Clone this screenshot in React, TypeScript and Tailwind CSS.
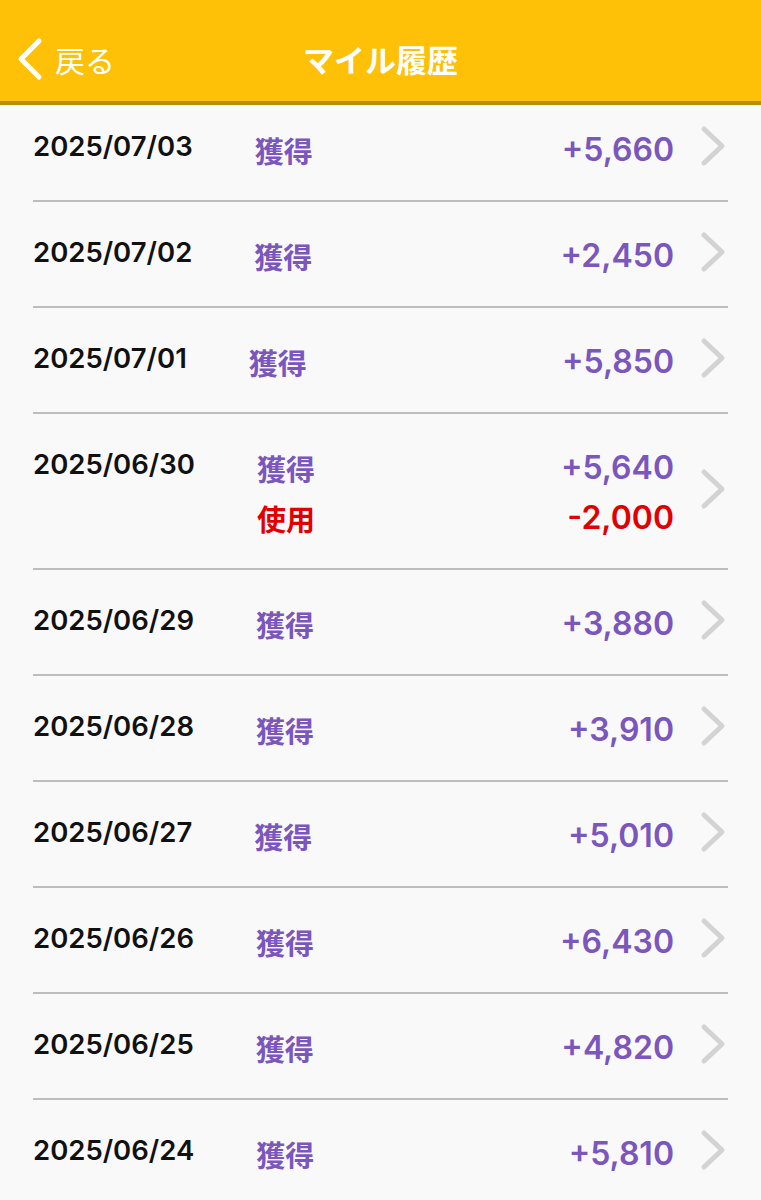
import React from 'react'

type Entry = { label: string; amount: string; kind: 'earn' | 'use' }
type Row = { date: string; entries: Entry[] }

const rows: Row[] = [
  { date: '2025/07/03', entries: [{ label: '獲得', amount: '+5,660', kind: 'earn' }] },
  { date: '2025/07/02', entries: [{ label: '獲得', amount: '+2,450', kind: 'earn' }] },
  { date: '2025/07/01', entries: [{ label: '獲得', amount: '+5,850', kind: 'earn' }] },
  {
    date: '2025/06/30',
    entries: [
      { label: '獲得', amount: '+5,640', kind: 'earn' },
      { label: '使用', amount: '-2,000', kind: 'use' },
    ],
  },
  { date: '2025/06/29', entries: [{ label: '獲得', amount: '+3,880', kind: 'earn' }] },
  { date: '2025/06/28', entries: [{ label: '獲得', amount: '+3,910', kind: 'earn' }] },
  { date: '2025/06/27', entries: [{ label: '獲得', amount: '+5,010', kind: 'earn' }] },
  { date: '2025/06/26', entries: [{ label: '獲得', amount: '+6,430', kind: 'earn' }] },
  { date: '2025/06/25', entries: [{ label: '獲得', amount: '+4,820', kind: 'earn' }] },
  { date: '2025/06/24', entries: [{ label: '獲得', amount: '+5,810', kind: 'earn' }] },
]

const latin = "font-['Inter','Liberation_Sans','Noto_Sans_CJK_JP',sans-serif]"
const jp = "font-['Noto_Sans_CJK_JP','Noto_Sans',sans-serif]"

function Chevron({ className }: { className?: string }) {
  return (
    <svg viewBox="0 0 26 42" className={className} fill="none">
      <path d="M4 4 L22 21 L4 38" stroke="currentColor" strokeWidth="5" strokeLinecap="round" strokeLinejoin="round" />
    </svg>
  )
}

function HistoryRow({ row }: { row: Row }) {
  return (
    <div className="mx-[33px] flex border-b-2 border-[#bdbdbd] pt-[25px] pb-[29px]">
      <div className={`${latin} text-[27.5px] font-semibold leading-[50px] text-[#111]`}>{row.date}</div>
      <div className="-mb-[4px] ml-[62px] mt-[4px] flex flex-1 flex-col">
        {row.entries.map((e, i) => (
          <div key={i} className="flex h-[50px] items-center">
            <span
              className={`${jp} text-[29px] font-bold leading-none ${e.kind === 'earn' ? 'text-[#7a56bd]' : 'text-[#e00000]'}`}
            >
              {e.label}
            </span>
            <span
              className={`${latin} ml-auto mr-[2px] text-[32px] font-semibold leading-none ${
                e.kind === 'earn' ? 'text-[#7a56bd]' : 'text-[#e00000]'
              }`}
            >
              {e.amount}
            </span>
          </div>
        ))}
      </div>
      <div className="ml-[24px] flex w-[28px] items-center self-stretch">
        <Chevron className="h-[42px] w-[26px] text-[#d3d3d3]" />
      </div>
    </div>
  )
}

export default function App() {
  return (
    <div className="flex h-[1200px] w-[761px] flex-col overflow-hidden bg-[#f9f9f9]">
      {/* header */}
      <div className="relative z-10 flex h-[105px] shrink-0 items-center border-b-[4px] border-[#b88e09] bg-[#ffc107] pt-[17px]">
        <div className="flex items-center pl-[17px]">
          <svg viewBox="0 0 26 44" className="h-[44px] w-[26px] text-white" fill="none">
            <path d="M22 4 L4 22 L22 40" stroke="currentColor" strokeWidth="5" strokeLinecap="round" strokeLinejoin="round" />
          </svg>
          <span className={`${jp} ml-[12px] text-[30px] text-white`}>戻る</span>
        </div>
        <div className={`${jp} pointer-events-none absolute left-0 right-0 text-center text-[31px] font-bold text-white`}>
          マイル履歴
        </div>
      </div>

      {/* list */}
      <div className="flex-1 overflow-hidden">
        <div className="-mt-[9px]">
          {rows.map((r) => (
            <HistoryRow key={r.date} row={r} />
          ))}
        </div>
      </div>
    </div>
  )
}
